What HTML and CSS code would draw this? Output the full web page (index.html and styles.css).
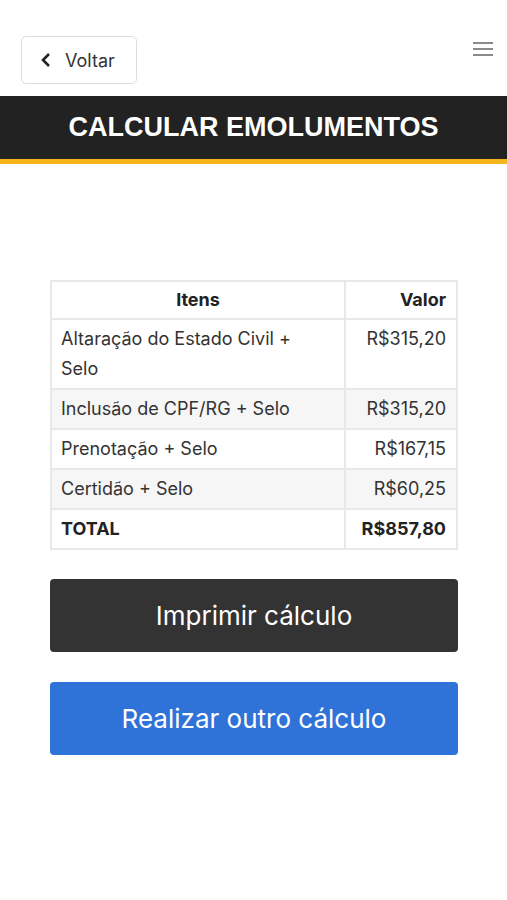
FILE: index.html
```html
<!DOCTYPE html>
<html lang="pt-BR">
<head>
    <meta charset="UTF-8">
    <meta name="viewport" content="width=device-width, initial-scale=1.0">
    <title>Calcular Emolumentos</title>
    <link rel="stylesheet" href="styles.css">
</head>
<body>
    <div class="topbar">
        <button class="back-btn">
            <svg width="12" height="16" viewBox="0 0 12 16">
                <polyline points="9,2 3,8 9,14" fill="none" stroke="#222" stroke-width="2.6"/>
            </svg>
            <span>Voltar</span>
        </button>
        <div class="menu">
            <span></span><span></span><span></span>
        </div>
    </div>

    <div class="title-bar">
        <h1>CALCULAR EMOLUMENTOS</h1>
    </div>

    <div class="content">
        <table class="result">
            <thead>
                <tr>
                    <th class="col-item">Itens</th>
                    <th class="col-value">Valor</th>
                </tr>
            </thead>
            <tbody>
                <tr>
                    <td class="col-item">Altaração do Estado Civil + Selo</td>
                    <td class="col-value">R$315,20</td>
                </tr>
                <tr class="striped">
                    <td class="col-item">Inclusão de CPF/RG + Selo</td>
                    <td class="col-value">R$315,20</td>
                </tr>
                <tr>
                    <td class="col-item">Prenotação + Selo</td>
                    <td class="col-value">R$167,15</td>
                </tr>
                <tr class="striped">
                    <td class="col-item">Certidão + Selo</td>
                    <td class="col-value">R$60,25</td>
                </tr>
                <tr class="total">
                    <td class="col-item">TOTAL</td>
                    <td class="col-value">R$857,80</td>
                </tr>
            </tbody>
        </table>

        <button class="btn btn-dark">Imprimir cálculo</button>
        <button class="btn btn-blue">Realizar outro cálculo</button>
    </div>
</body>
</html>
```

FILE: styles.css
```css
body {
    margin: 0;
    font-family: Inter, "Liberation Sans", Arial, sans-serif;
    color: #222;
    background: #fff;
}
.topbar {
    display: flex;
    justify-content: space-between;
    align-items: flex-start;
    padding: 36px 14px 12px 21px;
}
.back-btn {
    display: flex;
    align-items: center;
    gap: 13px;
    width: 116px;
    height: 48px;
    padding: 0 0 0 18px;
    background: #fff;
    border: 1px solid #dcdcdc;
    border-radius: 5px;
    font-family: inherit;
    font-size: 18px;
    color: #333;
}
.menu {
    display: flex;
    flex-direction: column;
    gap: 4px;
    width: 20px;
    margin-top: 6px;
}
.menu span {
    display: block;
    height: 2px;
    background: #8a8a8a;
}
.title-bar {
    background: #222222;
    border-bottom: 5px solid #f4b41a;
    height: 63px;
    display: flex;
    align-items: center;
    justify-content: center;
}
.title-bar h1 {
    margin: 0;
    color: #fff;
    font-family: "Liberation Sans", Arial, sans-serif;
    font-size: 27px;
    font-weight: bold;
}
.content {
    padding: 116px 49px 0 50px;
}
.result {
    width: 100%;
    border-collapse: collapse;
    font-size: 18px;
    color: #333;
}
.result th,
.result td {
    border: 2px solid #e8e8e8;
    padding: 4px 10px 4px 9px;
    line-height: 30px;
    vertical-align: top;
    text-align: left;
}
.result .col-item {
    padding-right: 22px;
}
.result th {
    padding-top: 3px;
    padding-bottom: 3px;
    font-weight: bold;
    color: #222;
}
.result th.col-item {
    text-align: center;
    padding-right: 9px;
}
.result .col-value {
    text-align: right;
    width: 91px;
}
.striped td {
    background: #f6f6f6;
}
.total td {
    font-weight: bold;
    color: #222;
}
.btn {
    display: block;
    width: 100%;
    height: 73px;
    border: none;
    border-radius: 4px;
    color: #fff;
    font-family: inherit;
    font-size: 26px;
}
.btn-dark {
    background: #333333;
    margin-top: 29px;
}
.btn-blue {
    background: #2f73d9;
    margin-top: 30px;
}
```
